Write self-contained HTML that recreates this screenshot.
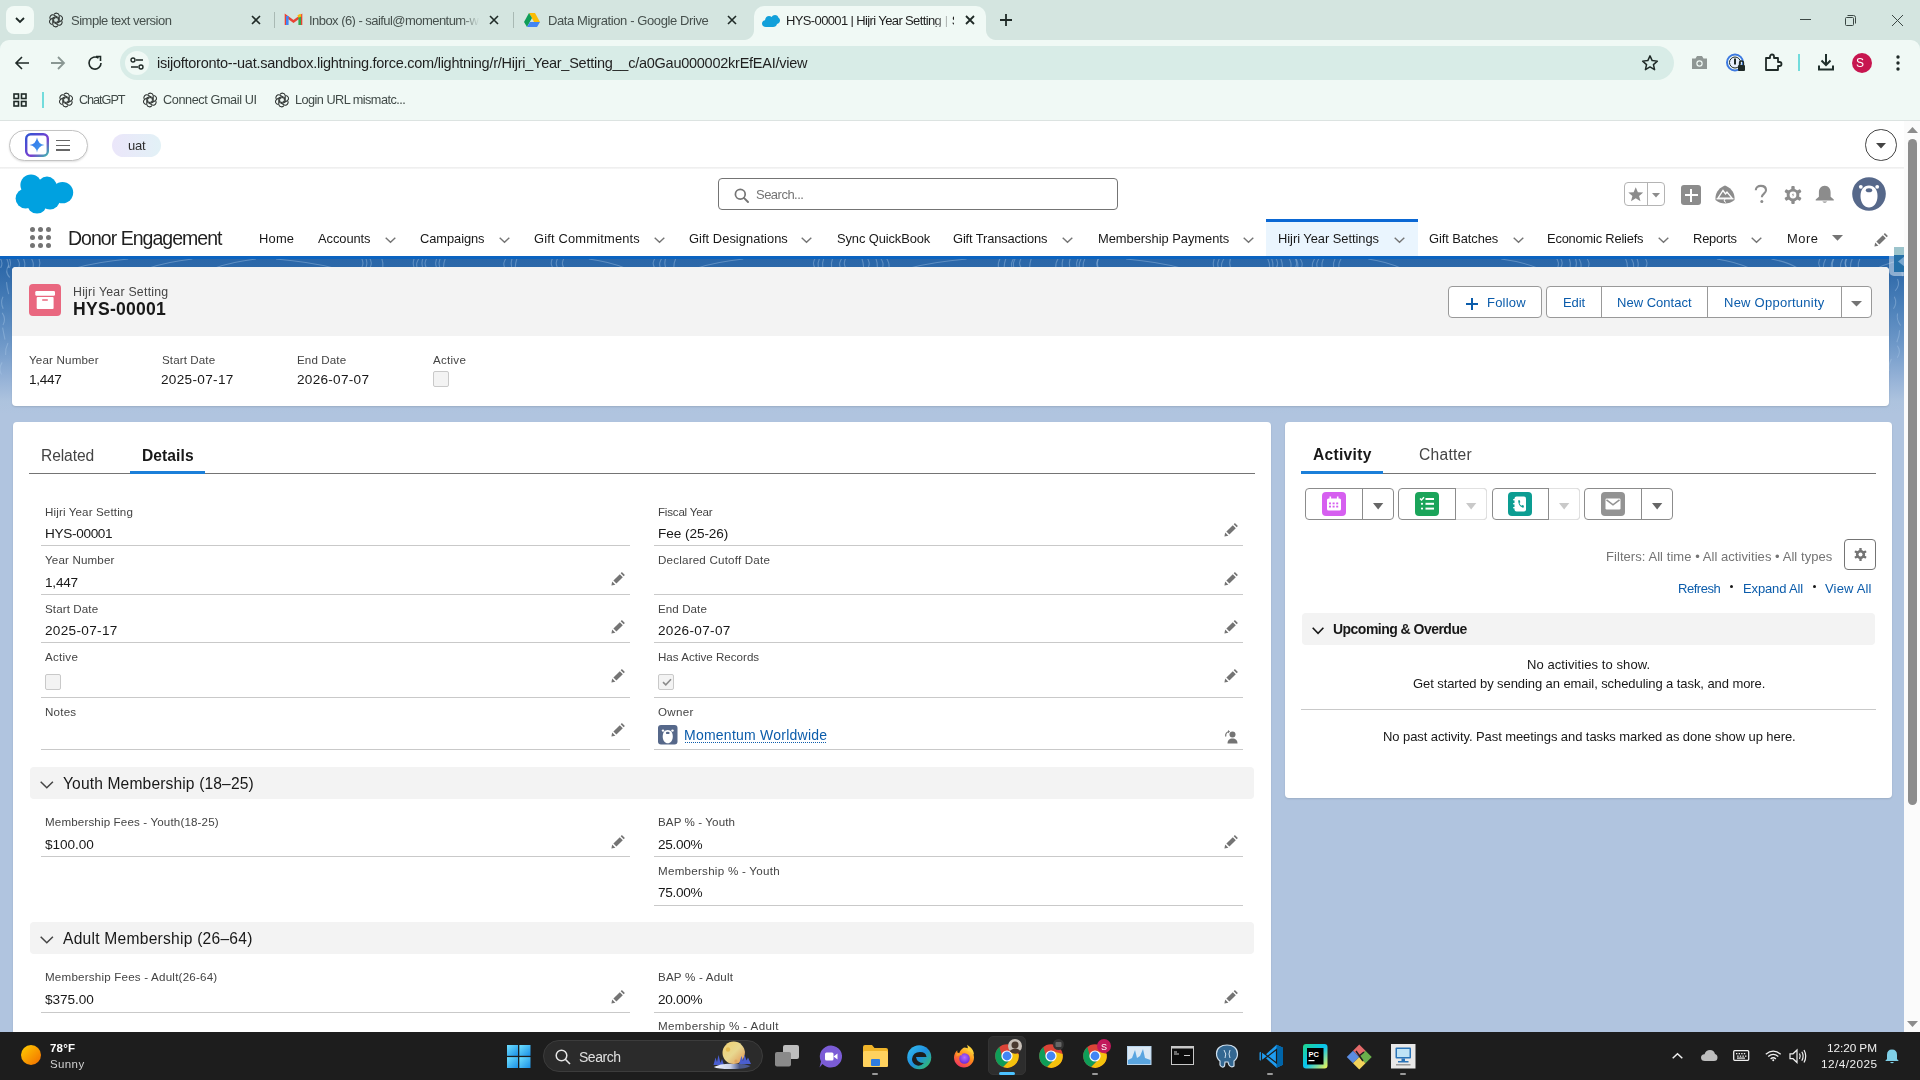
<!DOCTYPE html>
<html><head><meta charset="utf-8">
<style>
*{box-sizing:border-box;margin:0;padding:0}
html,body{width:1920px;height:1080px;overflow:hidden;background:#b0c4df;font-family:"Liberation Sans",sans-serif;}
.a{position:absolute}
.t{position:absolute;white-space:nowrap;line-height:1;font-family:"Liberation Sans",sans-serif;-webkit-font-smoothing:antialiased;will-change:transform}
body{-webkit-font-smoothing:antialiased}
svg{position:absolute;overflow:visible}
/* chrome */
#tabstrip{left:0;top:0;width:1920px;height:60px;background:#d4e5e0}
#toolbar{left:0;top:40px;width:1920px;height:81px;background:#f0f9f5;border-top-left-radius:9px;border-top-right-radius:9px}
#urlbar{left:120px;top:46.2px;width:1554px;height:33.6px;background:#d8ece7;border-radius:17px}
.tabt{font-size:13px;color:#46504d;top:14px}
.ctl{stroke:#1f2a27;stroke-width:1.6;fill:none}
/* salesforce */
#sfwrap{left:0;top:121px;width:1904px;height:911px;background:#b0c4df;overflow:hidden}
.lbl{font-size:12px;color:#444444}
.val{font-size:14px;color:#181818}
.line{position:absolute;height:1px;background:#dddbda}
.pen{position:absolute;width:14px;height:14px}
</style></head>
<body>
<!-- ================= CHROME TAB STRIP ================= -->
<div id="tabstrip" class="a"></div>
<div class="a" style="left:6px;top:6px;width:28px;height:28px;background:#f2faf6;border-radius:8px"></div>
<svg style="left:14px;top:15px" width="12" height="10"><path d="M2 3 L6 7 L10 3" stroke="#1f2a27" stroke-width="1.8" fill="none"></path></svg>

<!-- tab 1 -->
<svg style="left:49px;top:13px" width="14" height="14" viewBox="-12 -12 24 24"><g fill="none" stroke="#2a2f2d" stroke-width="1.8" stroke-linejoin="round"><path d="M-3.5 -9.5 A5 5 0 0 1 5.5 -8 L5.5 1.5 L1 4" transform="rotate(0)"></path><path d="M-3.5 -9.5 A5 5 0 0 1 5.5 -8 L5.5 1.5 L1 4" transform="rotate(60)"></path><path d="M-3.5 -9.5 A5 5 0 0 1 5.5 -8 L5.5 1.5 L1 4" transform="rotate(120)"></path><path d="M-3.5 -9.5 A5 5 0 0 1 5.5 -8 L5.5 1.5 L1 4" transform="rotate(180)"></path><path d="M-3.5 -9.5 A5 5 0 0 1 5.5 -8 L5.5 1.5 L1 4" transform="rotate(240)"></path><path d="M-3.5 -9.5 A5 5 0 0 1 5.5 -8 L5.5 1.5 L1 4" transform="rotate(300)"></path></g></svg>
<div class="t tabt" style="left: 71.22px; letter-spacing: -0.496px; top: 14px;">Simple text version</div>
<svg style="left:252px;top:16px" width="8" height="8"><path d="M0 0L8 8M8 0L0 8" stroke="#1f2a27" stroke-width="1.6"></path></svg>
<div class="a" style="left:274px;top:12px;width:1px;height:16px;background:#a9b9b4"></div>
<!-- tab 2 -->
<svg style="left:286px;top:14px" width="15" height="11" viewBox="0 0 15 11"><path d="M0 11V2L7.5 7.5L15 2V11" fill="none" stroke="#ea4335" stroke-width="2.6"></path><path d="M1.3 11V2" stroke="#4285f4" stroke-width="2.6"></path><path d="M13.7 11V2" stroke="#34a853" stroke-width="2.6"></path><path d="M12 2.5 L15 1" stroke="#fbbc04" stroke-width="2.6"></path></svg>
<div class="t tabt" style="left: 309.22px; width: 172px; overflow: hidden; letter-spacing: -0.548px; top: 14px;">Inbox (6) - saiful@momentum-w</div>
<div class="a" style="left:462px;top:10px;width:22px;height:20px;background:linear-gradient(90deg,rgba(212,229,224,0),#d4e5e0 80%)"></div>
<svg style="left:490px;top:16px" width="8" height="8"><path d="M0 0L8 8M8 0L0 8" stroke="#1f2a27" stroke-width="1.6"></path></svg>
<div class="a" style="left:513px;top:12px;width:1px;height:16px;background:#a9b9b4"></div>
<!-- tab 3 -->
<svg style="left:524px;top:13px" width="16" height="14" viewBox="0 0 16 14"><path d="M5 0h6l5 9H10z" fill="#fbbc04"></path><path d="M5 0L0 9l3 5 5-9z" fill="#0f9d58"></path><path d="M3 14h10l3-5H6z" fill="#4285f4"></path></svg>
<div class="t tabt" style="left: 547.72px; letter-spacing: -0.399px; top: 14px;">Data Migration - Google Drive</div>
<svg style="left:728px;top:16px" width="8" height="8"><path d="M0 0L8 8M8 0L0 8" stroke="#1f2a27" stroke-width="1.6"></path></svg>
<!-- active tab -->
<div class="a" style="left:754px;top:6px;width:232px;height:40px;background:#f0f9f5;border-radius:10px 10px 0 0"></div>
<div class="a" style="left:744px;top:30px;width:10px;height:10px;background:radial-gradient(circle at 0 0,#d4e5e0 9.5px,#f0f9f5 10.5px)"></div>
<div class="a" style="left:986px;top:30px;width:10px;height:10px;background:radial-gradient(circle at 100% 0,#d4e5e0 9.5px,#f0f9f5 10.5px)"></div>
<svg style="left:762px;top:15px" width="18" height="12" viewBox="0 0 18 12"><path d="M4 12C1.5 12 0 10.5 0 8.5 0 6.5 1.5 5.3 3 5.2 3.3 2.6 5 1 7 1c1 0 2 .4 2.6 1C10.3 .8 11.5 0 13 0c1.8 0 3.2 1.2 3.5 2.8 1 .5 1.5 1.6 1.5 2.8 0 1.8-1.3 3.3-3 3.4C14.6 10.8 13 12 11 12z" fill="#12a0da"></path></svg>
<div class="t tabt" style="left: 785.72px; color: rgb(31, 31, 31); width: 168px; overflow: hidden;"><span class="t" style="position: static; letter-spacing: -0.625px;">HYS-00001 | Hijri Year Setting</span> | Salesforce</div>
<div class="a" style="left:934px;top:10px;width:18px;height:20px;background:linear-gradient(90deg,rgba(240,249,245,0),#f0f9f5)"></div>
<svg style="left:966px;top:16px" width="8" height="8"><path d="M0 0L8 8M8 0L0 8" stroke="#1f2a27" stroke-width="1.8"></path></svg>
<svg style="left:1000px;top:14px" width="12" height="12"><path d="M6 0V12M0 6H12" stroke="#1f2a27" stroke-width="1.8"></path></svg>
<!-- window controls -->
<div class="a" style="left:1800px;top:19px;width:11px;height:1px;background:#3b4744"></div>
<svg style="left:1845px;top:15px" width="11" height="11"><rect x="0.5" y="2.5" width="8" height="8" fill="none" stroke="#3b4744" rx="1"></rect><path d="M2.5 0.5h6a2 2 0 0 1 2 2v6" fill="none" stroke="#3b4744"></path></svg>
<svg style="left:1892px;top:15px" width="11" height="11"><path d="M0 0L11 11M11 0L0 11" stroke="#3b4744" stroke-width="1"></path></svg>

<!-- ================= TOOLBAR ================= -->
<div id="toolbar" class="a"></div>
<div id="urlbar" class="a"></div>
<!-- back / fwd / reload -->
<svg style="left:14px;top:55px" width="16" height="16" viewBox="0 0 16 16"><path d="M15 8H2M8 2L2 8L8 14" class="ctl" stroke-width="1.8"></path></svg>
<svg style="left:50px;top:55px" width="16" height="16" viewBox="0 0 16 16"><path d="M1 8H14M8 2L14 8L8 14" fill="none" stroke="#8a9793" stroke-width="1.8"></path></svg>
<svg style="left:87px;top:55px" width="16" height="16" viewBox="0 0 16 16"><path d="M14 8A6 6 0 1 1 11.5 3.2" class="ctl" stroke-width="1.8"></path><path d="M9 1.5H13.5V6" class="ctl" stroke-width="1.8"></path></svg>
<!-- site info -->
<div class="a" style="left:125px;top:51px;width:24px;height:24px;border-radius:12px;background:#f0f9f5"></div>
<svg style="left:130px;top:57px" width="14" height="13" viewBox="0 0 14 13"><circle cx="3" cy="3" r="2" fill="none" stroke="#1f2a27" stroke-width="1.4"></circle><path d="M6 3H13M1 10H8" stroke="#1f2a27" stroke-width="1.6"></path><circle cx="11" cy="10" r="2" fill="none" stroke="#1f2a27" stroke-width="1.4"></circle></svg>
<div class="t" style="left: 156.83px; font-size: 14.5px; color: rgb(31, 31, 31); letter-spacing: -0.253px; top: 55.7px;">isijoftoronto--uat.sandbox.lightning.force.com/lightning/r/Hijri_Year_Setting__c/a0Gau000002krEfEAI/view</div>
<!-- star -->
<svg style="left:1641px;top:54px" width="18" height="18" viewBox="0 0 24 24"><path d="M12 2.5l2.9 6.3 6.9.7-5.2 4.6 1.5 6.8L12 17.3l-6.1 3.6 1.5-6.8L2.2 9.5l6.9-.7z" fill="none" stroke="#1f2a27" stroke-width="2" stroke-linejoin="round"></path></svg>
<!-- camera -->
<svg style="left:1691px;top:55px" width="17" height="15" viewBox="0 0 17 15"><path d="M1 3.5h3.5l1.5-2.5h5l1.5 2.5H16V14H1z" fill="#8f9794"></path><circle cx="8.5" cy="8.5" r="3.2" fill="#f0f9f5"></circle><circle cx="8.5" cy="8.5" r="2" fill="#8f9794"></circle></svg>
<!-- 1password -->
<svg style="left:1726px;top:53px" width="20" height="20" viewBox="0 0 20 20"><circle cx="9" cy="9.5" r="8" fill="none" stroke="#3d7ae0" stroke-width="2"></circle><circle cx="9" cy="9.5" r="5.5" fill="#e8f0fb" stroke="#1f2a27" stroke-width="1"></circle><rect x="8" y="5.5" width="2" height="6" fill="#1f2a27"></rect><rect x="12" y="12" width="7" height="6" fill="#1f2a27" rx="1"></rect><path d="M13.5 12v-2a2 2 0 0 1 4 0v2" fill="none" stroke="#1f2a27" stroke-width="1.3"></path></svg>
<!-- extension -->
<svg style="left:1764px;top:53px" width="19" height="19" viewBox="0 0 19 19"><path d="M2 5h4V3.5a2 2 0 0 1 4 0V5h4v4h1.5a2 2 0 0 1 0 4H14v4H2z" fill="none" stroke="#1f2a27" stroke-width="1.8" stroke-linejoin="round"></path></svg>
<div class="a" style="left:1798px;top:54px;width:2px;height:17px;background:#72dcdc"></div>
<!-- download -->
<svg style="left:1817px;top:53px" width="18" height="18" viewBox="0 0 18 18"><path d="M9 1V12M4.5 7.5L9 12L13.5 7.5M2 12.5V16.5H16V12.5" fill="none" stroke="#1f2f2b" stroke-width="2"></path></svg>
<div class="a" style="left:1852px;top:53px;width:20px;height:20px;border-radius:10px;background:#c7164f"></div>
<div class="t" style="left: 1856.28px; top: 57px; font-size: 12px; color: rgb(255, 255, 255);">S</div>
<svg style="left:1896px;top:55px" width="4" height="16"><circle cx="2" cy="2" r="1.7" fill="#1f2a27"></circle><circle cx="2" cy="8" r="1.7" fill="#1f2a27"></circle><circle cx="2" cy="14" r="1.7" fill="#1f2a27"></circle></svg>

<!-- bookmarks -->
<svg style="left:13px;top:93px" width="14" height="14" viewBox="0 0 14 14"><g fill="none" stroke="#1f2a27" stroke-width="1.6"><rect x="1" y="1" width="4.5" height="4.5"></rect><rect x="8.5" y="1" width="4.5" height="4.5"></rect><rect x="1" y="8.5" width="4.5" height="4.5"></rect><rect x="8.5" y="8.5" width="4.5" height="4.5"></rect></g></svg>
<div class="a" style="left:42px;top:92px;width:2px;height:16px;background:#72dcdc"></div>
<svg style="left:59px;top:93px" width="14" height="14" viewBox="-12 -12 24 24"><g fill="none" stroke="#2a2f2d" stroke-width="1.8" stroke-linejoin="round"><path d="M-3.5 -9.5 A5 5 0 0 1 5.5 -8 L5.5 1.5 L1 4" transform="rotate(0)"></path><path d="M-3.5 -9.5 A5 5 0 0 1 5.5 -8 L5.5 1.5 L1 4" transform="rotate(60)"></path><path d="M-3.5 -9.5 A5 5 0 0 1 5.5 -8 L5.5 1.5 L1 4" transform="rotate(120)"></path><path d="M-3.5 -9.5 A5 5 0 0 1 5.5 -8 L5.5 1.5 L1 4" transform="rotate(180)"></path><path d="M-3.5 -9.5 A5 5 0 0 1 5.5 -8 L5.5 1.5 L1 4" transform="rotate(240)"></path><path d="M-3.5 -9.5 A5 5 0 0 1 5.5 -8 L5.5 1.5 L1 4" transform="rotate(300)"></path></g></svg>
<div class="t" style="left: 79.44px; font-size: 12.7px; color: rgb(64, 74, 71); letter-spacing: -1.053px; top: 94px;">ChatGPT</div>
<svg style="left:143px;top:93px" width="14" height="14" viewBox="-12 -12 24 24"><g fill="none" stroke="#2a2f2d" stroke-width="1.8" stroke-linejoin="round"><path d="M-3.5 -9.5 A5 5 0 0 1 5.5 -8 L5.5 1.5 L1 4" transform="rotate(0)"></path><path d="M-3.5 -9.5 A5 5 0 0 1 5.5 -8 L5.5 1.5 L1 4" transform="rotate(60)"></path><path d="M-3.5 -9.5 A5 5 0 0 1 5.5 -8 L5.5 1.5 L1 4" transform="rotate(120)"></path><path d="M-3.5 -9.5 A5 5 0 0 1 5.5 -8 L5.5 1.5 L1 4" transform="rotate(180)"></path><path d="M-3.5 -9.5 A5 5 0 0 1 5.5 -8 L5.5 1.5 L1 4" transform="rotate(240)"></path><path d="M-3.5 -9.5 A5 5 0 0 1 5.5 -8 L5.5 1.5 L1 4" transform="rotate(300)"></path></g></svg>
<div class="t" style="left: 163.24px; font-size: 12.7px; color: rgb(64, 74, 71); letter-spacing: -0.41px; top: 94px;">Connect Gmail UI</div>
<svg style="left:275px;top:93px" width="14" height="14" viewBox="-12 -12 24 24"><g fill="none" stroke="#2a2f2d" stroke-width="1.8" stroke-linejoin="round"><path d="M-3.5 -9.5 A5 5 0 0 1 5.5 -8 L5.5 1.5 L1 4" transform="rotate(0)"></path><path d="M-3.5 -9.5 A5 5 0 0 1 5.5 -8 L5.5 1.5 L1 4" transform="rotate(60)"></path><path d="M-3.5 -9.5 A5 5 0 0 1 5.5 -8 L5.5 1.5 L1 4" transform="rotate(120)"></path><path d="M-3.5 -9.5 A5 5 0 0 1 5.5 -8 L5.5 1.5 L1 4" transform="rotate(180)"></path><path d="M-3.5 -9.5 A5 5 0 0 1 5.5 -8 L5.5 1.5 L1 4" transform="rotate(240)"></path><path d="M-3.5 -9.5 A5 5 0 0 1 5.5 -8 L5.5 1.5 L1 4" transform="rotate(300)"></path></g></svg>
<div class="t" style="left: 294.74px; font-size: 12.7px; color: rgb(64, 74, 71); letter-spacing: -0.529px; top: 94px;">Login URL mismatc...</div>
<div class="a" style="left:0;top:120px;width:1920px;height:1px;background:#dce3e1"></div>

<div class="a" style="left:0px;top:121px;width:1904px;height:911px;background:#b0c4df"></div>
<div class="a" style="left:0px;top:121px;width:1904px;height:46px;background:#fff"></div>
<div class="a" style="left:0px;top:167px;width:1904px;height:2px;background:linear-gradient(#ececec,#f7f7f7)"></div>
<div class="a" style="left:0px;top:169px;width:1904px;height:87px;background:#fff"></div>
<div class="a" style="left:8.5px;top:129.5px;width:79px;height:31px;border:1px solid #c3c3c3;border-radius:16px;background:#fff;box-shadow:0 1px 2px rgba(0,0,0,0.12)"></div>
<svg style="left:25px;top:133px;" width="24" height="24"><defs><linearGradient id="ag" x1="0" y1="0" x2="1" y2="1"><stop offset="0" stop-color="#2f55d4"></stop><stop offset="0.6" stop-color="#7a3fd0"></stop><stop offset="1" stop-color="#3fb6b0"></stop></linearGradient><linearGradient id="as" x1="0" y1="0" x2="1" y2="1"><stop offset="0" stop-color="#2a6ee8"></stop><stop offset="1" stop-color="#4aa0f0"></stop></linearGradient></defs><rect x="1.2" y="1.2" width="21.6" height="21.6" rx="4.5" fill="#fff" stroke="url(#ag)" stroke-width="2.4"></rect><path d="M12 4.5 Q13 11 19.5 12 Q13 13 12 19.5 Q11 13 4.5 12 Q11 11 12 4.5Z" fill="url(#as)"></path></svg>
<div class="a" style="left:56.2px;top:139.6px;width:13.8px;height:1.4px;background:#666"></div>
<div class="a" style="left:56.2px;top:144.5px;width:13.8px;height:1.4px;background:#666"></div>
<div class="a" style="left:56.2px;top:149.4px;width:13.8px;height:1.4px;background:#666"></div>
<div class="a" style="left:112px;top:134px;width:49px;height:23px;border-radius:12px;background:linear-gradient(90deg,#ebe6fa,#e2f1f6)"></div>
<div class="t" style="left: 127.97px; font-size: 13px; color: rgb(46, 46, 46); letter-spacing: -0.239px; top: 138.75px;">uat</div>
<div class="a" style="left:1865px;top:129px;width:31.5px;height:31.5px;border:1px solid #444;border-radius:50%"></div>
<svg style="left:1875.8px;top:142.5px;" width="10" height="5.5"><path d="M0 0 L10 0 L5.0 5.5Z" fill="#444"></path></svg>
<svg style="left:14px;top:172px;" width="61" height="44"><g fill="#00a1e0"><circle cx="17" cy="13" r="10.6"></circle><circle cx="33" cy="14.2" r="9.6"></circle><circle cx="48.5" cy="20.6" r="10.7"></circle><circle cx="11.6" cy="26.5" r="10"></circle><circle cx="23" cy="31.6" r="10"></circle><circle cx="36" cy="27.5" r="10"></circle><rect x="14" y="15" width="34" height="13"></rect></g></svg>
<div class="a" style="left:718px;top:178px;width:400px;height:32px;border:1px solid #747474;border-radius:4px;background:#fff"></div>
<svg style="left:734px;top:188px;" width="16" height="16"><circle cx="6.3" cy="6.3" r="4.9" fill="none" stroke="#747474" stroke-width="1.7"></circle><path d="M9.9 9.9 L14 14" stroke="#747474" stroke-width="1.9" stroke-linecap="round"></path></svg>
<div class="t" style="left: 755.92px; font-size: 13px; color: rgb(116, 116, 116); letter-spacing: -0.516px; top: 188.3px;">Search...</div>
<div class="a" style="left:1624px;top:182px;width:41px;height:24px;border:1px solid #b4b4b4;border-radius:4px"></div>
<div class="a" style="left:1647px;top:182px;width:1px;height:24px;background:#b4b4b4"></div>
<svg style="left:1628px;top:187.2px;" width="15.5" height="15"><path d="M7.75 0.3 L9.9 5.2 L15.2 5.5 L11.1 8.9 L12.5 14.2 L7.75 11.3 L3 14.2 L4.4 8.9 L0.3 5.5 L5.6 5.2Z" fill="#8c8c8c"></path></svg>
<svg style="left:1651.5px;top:193px;" width="8" height="4.5"><path d="M0 0 L8 0 L4.0 4.5Z" fill="#8c8c8c"></path></svg>
<div class="a" style="left:1681px;top:185px;width:20px;height:20px;background:#8c8c8c;border-radius:3px"></div>
<div class="a" style="left:1684.5px;top:193.9px;width:13px;height:2.4px;background:#fff"></div>
<div class="a" style="left:1689.8px;top:188.6px;width:2.4px;height:13px;background:#fff"></div>
<svg style="left:1715px;top:185px;" width="20" height="19"><path d="M10 0.5 C14.5 2 19 6.5 19.5 12 L19.5 15 C17 17.5 13 18.5 10 18.5 C7 18.5 3 17.5 0.5 15 L0.5 12 C1 6.5 5.5 2 10 0.5Z" fill="#8c8c8c"></path><path d="M3 13.2 L8 5.5 L10.5 9 L12 7 L17 13.2Z" fill="none" stroke="#fff" stroke-width="1.3"></path><path d="M1.5 13.8 L18.5 13.8" stroke="#fff" stroke-width="1.2"></path><path d="M10 14 L9 16 L11 17.5" stroke="#fff" stroke-width="1" fill="none"></path></svg>
<svg style="left:1754px;top:185px;" width="14" height="19"><path d="M1.8 5.2 C1.8 2.5 4 0.9 6.8 0.9 C9.8 0.9 12 2.6 12 5.3 C12 8.5 7.8 8.8 7.8 12.3" fill="none" stroke="#8c8c8c" stroke-width="2.1"></path><circle cx="7.8" cy="16.6" r="1.5" fill="#8c8c8c"></circle></svg>
<svg style="left:1784px;top:186px;" width="18" height="18"><g fill="#8c8c8c"><circle cx="9" cy="9" r="6.3"></circle><rect x="7.3" y="0" width="3.4" height="18" rx="1"></rect><rect x="7.3" y="0" width="3.4" height="18" rx="1" transform="rotate(60 9 9)"></rect><rect x="7.3" y="0" width="3.4" height="18" rx="1" transform="rotate(120 9 9)"></rect></g><circle cx="9" cy="9" r="3.4" fill="#fff"></circle><path d="M9.6 6.6 L7.8 9.3 L9.3 9.3 L8.4 11.5 L10.3 8.6 L8.9 8.6Z" fill="#8c8c8c"></path></svg>
<svg style="left:1815px;top:184.5px;" width="19.5" height="19"><path d="M9.75 0.8 C13.6 0.8 15.6 3.8 15.6 7.5 L15.6 11.8 L18.8 14.6 L18.8 15.6 L0.7 15.6 L0.7 14.6 L3.9 11.8 L3.9 7.5 C3.9 3.8 5.9 0.8 9.75 0.8Z" fill="#8c8c8c"></path><path d="M7.3 16.6 Q9.75 19 12.2 16.6Z" fill="#8c8c8c"></path></svg>
<svg style="left:1852px;top:177px;" width="34" height="34"><circle cx="17" cy="17" r="16.8" fill="#56688a"></circle><circle cx="8.8" cy="9.8" r="1.9" fill="#fff"></circle><circle cx="25.2" cy="9.8" r="1.9" fill="#fff"></circle><path d="M17 8.5 C22.5 8.5 25.5 13 25.5 19 C25.5 26 21.5 30.5 17 30.5 C12.5 30.5 8.5 26 8.5 19 C8.5 13 11.5 8.5 17 8.5Z" fill="#fff"></path><ellipse cx="17" cy="13.2" rx="3.2" ry="2" fill="#56688a"></ellipse></svg>
<div class="a" style="left:30.0px;top:227.0px;width:5.2px;height:5.2px;border-radius:50%;background:#747474"></div>
<div class="a" style="left:30.0px;top:235.0px;width:5.2px;height:5.2px;border-radius:50%;background:#747474"></div>
<div class="a" style="left:30.0px;top:243.0px;width:5.2px;height:5.2px;border-radius:50%;background:#747474"></div>
<div class="a" style="left:38.1px;top:227.0px;width:5.2px;height:5.2px;border-radius:50%;background:#747474"></div>
<div class="a" style="left:38.1px;top:235.0px;width:5.2px;height:5.2px;border-radius:50%;background:#747474"></div>
<div class="a" style="left:38.1px;top:243.0px;width:5.2px;height:5.2px;border-radius:50%;background:#747474"></div>
<div class="a" style="left:46.199999999999996px;top:227.0px;width:5.2px;height:5.2px;border-radius:50%;background:#747474"></div>
<div class="a" style="left:46.199999999999996px;top:235.0px;width:5.2px;height:5.2px;border-radius:50%;background:#747474"></div>
<div class="a" style="left:46.199999999999996px;top:243.0px;width:5.2px;height:5.2px;border-radius:50%;background:#747474"></div>
<div class="t" style="left: 67.58px; font-size: 19.5px; color: rgb(31, 31, 31); letter-spacing: -0.978px; top: 228.5px;">Donor Engagement</div>
<div class="a" style="left:1266.25px;top:219px;width:152px;height:37px;background:#eaf5fe"></div>
<div class="a" style="left:1266.25px;top:219px;width:152px;height:3px;background:#0b68d4"></div>
<div class="t" style="left: 259.23px; font-size: 12.9px; color: rgb(24, 24, 24); letter-spacing: 0.216px; top: 233px;">Home</div>
<div class="t" style="left: 317.98px; font-size: 12.9px; color: rgb(24, 24, 24); letter-spacing: -0.07px; top: 233px;">Accounts</div>
<svg style="left:385px;top:236.8px;" width="11" height="6"><path d="M0.7 0.7 L5.5 5.3 L10.3 0.7" fill="none" stroke="#747474" stroke-width="1.4"></path></svg>
<div class="t" style="left: 420.48px; font-size: 12.9px; color: rgb(24, 24, 24); letter-spacing: -0.083px; top: 233px;">Campaigns</div>
<svg style="left:498.75px;top:236.8px;" width="11" height="6"><path d="M0.7 0.7 L5.5 5.3 L10.3 0.7" fill="none" stroke="#747474" stroke-width="1.4"></path></svg>
<div class="t" style="left: 534.23px; font-size: 12.9px; color: rgb(24, 24, 24); letter-spacing: 0.177px; top: 233px;">Gift Commitments</div>
<svg style="left:653.75px;top:236.8px;" width="11" height="6"><path d="M0.7 0.7 L5.5 5.3 L10.3 0.7" fill="none" stroke="#747474" stroke-width="1.4"></path></svg>
<div class="t" style="left: 689.23px; font-size: 12.9px; color: rgb(24, 24, 24); letter-spacing: 0.039px; top: 233px;">Gift Designations</div>
<svg style="left:801.25px;top:236.8px;" width="11" height="6"><path d="M0.7 0.7 L5.5 5.3 L10.3 0.7" fill="none" stroke="#747474" stroke-width="1.4"></path></svg>
<div class="t" style="left: 837.23px; font-size: 12.9px; color: rgb(24, 24, 24); letter-spacing: -0.099px; top: 233px;">Sync QuickBook</div>
<div class="t" style="left: 953.48px; font-size: 12.9px; color: rgb(24, 24, 24); letter-spacing: -0.136px; top: 233px;">Gift Transactions</div>
<svg style="left:1062px;top:236.8px;" width="11" height="6"><path d="M0.7 0.7 L5.5 5.3 L10.3 0.7" fill="none" stroke="#747474" stroke-width="1.4"></path></svg>
<div class="t" style="left: 1097.98px; font-size: 12.9px; color: rgb(24, 24, 24); letter-spacing: -0.03px; top: 233px;">Membership Payments</div>
<svg style="left:1242.5px;top:236.8px;" width="11" height="6"><path d="M0.7 0.7 L5.5 5.3 L10.3 0.7" fill="none" stroke="#747474" stroke-width="1.4"></path></svg>
<div class="t" style="left: 1278.48px; font-size: 12.9px; color: rgb(24, 24, 24); letter-spacing: -0.039px; top: 233px;">Hijri Year Settings</div>
<svg style="left:1393.75px;top:236.8px;" width="11" height="6"><path d="M0.7 0.7 L5.5 5.3 L10.3 0.7" fill="none" stroke="#747474" stroke-width="1.4"></path></svg>
<div class="t" style="left: 1428.73px; font-size: 12.9px; color: rgb(24, 24, 24); letter-spacing: -0.084px; top: 233px;">Gift Batches</div>
<svg style="left:1512.5px;top:236.8px;" width="11" height="6"><path d="M0.7 0.7 L5.5 5.3 L10.3 0.7" fill="none" stroke="#747474" stroke-width="1.4"></path></svg>
<div class="t" style="left: 1547.23px; font-size: 12.9px; color: rgb(24, 24, 24); letter-spacing: -0.204px; top: 233px;">Economic Reliefs</div>
<svg style="left:1657.5px;top:236.8px;" width="11" height="6"><path d="M0.7 0.7 L5.5 5.3 L10.3 0.7" fill="none" stroke="#747474" stroke-width="1.4"></path></svg>
<div class="t" style="left: 1693.48px; font-size: 12.9px; color: rgb(24, 24, 24); letter-spacing: -0.183px; top: 233px;">Reports</div>
<svg style="left:1751.25px;top:236.8px;" width="11" height="6"><path d="M0.7 0.7 L5.5 5.3 L10.3 0.7" fill="none" stroke="#747474" stroke-width="1.4"></path></svg>
<div class="t" style="left: 1787.48px; font-size: 12.9px; color: rgb(24, 24, 24); letter-spacing: 0.555px; top: 233px;">More</div>
<svg style="left:1831.7px;top:235px;" width="11" height="5.8"><path d="M0 0 L11 0 L5.5 5.8Z" fill="#747474"></path></svg>
<svg style="left:1873.5px;top:232.5px;" width="14" height="14"><g fill="#747474"><path d="M0.4 13.6 L1.2 9.6 L4.4 12.8Z"></path><path d="M2.4 8.6 L8.8 2.2 L11.8 5.2 L5.4 11.6Z"></path><path d="M9.7 1.3 L10.9 0.1 L13.9 3.1 L12.7 4.3Z"></path></g></svg>
<div class="a" style="left:0px;top:256px;width:1904px;height:200px;background:linear-gradient(180deg,#2a66a8 0px,#2c68a9 10px,#3770ae 25px,#4b80b9 50px,#6e98c8 88px,#98b4d8 125px,#adc3de 145px,#b0c4df 158px)"></div>
<svg style="left:0;top:0" width="1904" height="1080"><g fill="none" stroke="rgba(175,205,235,0.38)" stroke-width="1.1"><path d="M0.0 258 Q3.6 262.5 0.6 268"></path><path d="M6.4 258 Q9.1 262.5 8.3 268"></path><path d="M9.1 258 Q11.7 262.5 9.5 268"></path><path d="M16.8 258 Q20.6 262.5 18.8 268"></path><path d="M23.1 258 Q25.6 262.5 24.5 268"></path><path d="M31.1 258 Q34.2 262.5 33.0 268"></path><path d="M39.0 258 Q40.6 262.5 39.1 268"></path><path d="M76.0 268 Q96.9 262 128.2 259"></path><path d="M149.2 268 Q166.5 262 192.4 259"></path><path d="M214.9 268 Q231.3 262 255.9 259"></path><path d="M276.0 259 Q310.6 262 333.7 268"></path><path d="M361.4 258 Q364.3 262.5 361.7 268"></path><path d="M365.7 258 Q367.9 262.5 365.9 268"></path><path d="M369.5 258 Q372.7 262.5 370.1 268"></path><path d="M381.7 258 Q383.3 262.5 382.8 268"></path><path d="M414.4 258 Q412.2 262.5 414.2 268"></path><path d="M419.4 258 Q415.5 262.5 417.1 268"></path><path d="M423.1 258 Q421.0 262.5 422.8 268"></path><path d="M427.0 258 Q423.5 262.5 426.4 268"></path><path d="M437.1 258 Q434.5 262.5 436.6 268"></path><path d="M445.4 258 Q443.6 262.5 443.5 268"></path><path d="M440.5 258 Q438.0 262.5 439.9 268"></path><path d="M506.4 258 Q502.4 262.5 504.6 268"></path><path d="M512.1 258 Q510.5 262.5 511.7 268"></path><path d="M517.0 258 Q515.5 262.5 515.2 268"></path><path d="M552.8 258 Q549.7 262.5 552.7 268"></path><path d="M557.9 258 Q554.8 262.5 557.5 268"></path><path d="M564.3 258 Q560.7 262.5 563.9 268"></path><path d="M588.9 259 Q610.5 262 624.8 268"></path><path d="M655.3 258 Q651.4 262.5 654.7 268"></path><path d="M662.1 258 Q658.4 262.5 660.3 268"></path><path d="M665.8 258 Q664.0 262.5 665.7 268"></path><path d="M675.9 258 Q673.8 262.5 673.8 268"></path><path d="M697.4 268 Q715.7 262 743.2 259"></path><path d="M815.5 258 Q811.8 262.5 814.9 268"></path><path d="M819.6 258 Q817.4 262.5 818.3 268"></path><path d="M823.9 258 Q822.0 262.5 822.8 268"></path><path d="M832.7 258 Q830.9 262.5 831.6 268"></path><path d="M842.2 258 Q838.3 262.5 840.3 268"></path><path d="M845.9 258 Q843.0 262.5 845.5 268"></path><path d="M861.8 258 Q863.3 262.5 863.7 268"></path><path d="M867.2 258 Q870.6 262.5 868.2 268"></path><path d="M875.8 258 Q877.5 262.5 877.4 268"></path><path d="M880.4 258 Q884.2 262.5 882.6 268"></path><path d="M886.2 258 Q889.7 262.5 889.0 268"></path><path d="M910.0 268 Q932.6 262 966.6 259"></path><path d="M1000.2 258 Q997.7 262.5 998.4 268"></path><path d="M1006.0 258 Q1004.3 262.5 1004.1 268"></path><path d="M1014.1 258 Q1010.4 262.5 1011.9 268"></path><path d="M1015.7 258 Q1012.3 262.5 1013.9 268"></path><path d="M1021.5 258 Q1017.9 262.5 1021.2 268"></path><path d="M1031.4 258 Q1029.8 262.5 1029.6 268"></path><path d="M1058.4 258 Q1055.4 262.5 1055.7 268"></path><path d="M1063.2 258 Q1061.7 262.5 1062.3 268"></path><path d="M1070.5 258 Q1068.5 262.5 1070.0 268"></path><path d="M1078.6 258 Q1075.4 262.5 1077.3 268"></path><path d="M1085.1 258 Q1082.8 262.5 1083.1 268"></path><path d="M1081.4 258 Q1078.8 262.5 1079.0 268"></path><path d="M1098.9 258 Q1095.2 262.5 1097.7 268"></path><path d="M1098.7 258 Q1096.4 262.5 1098.3 268"></path><path d="M1126.1 259 Q1158.9 262 1180.8 268"></path><path d="M1214.6 258 Q1212.4 262.5 1213.9 268"></path><path d="M1219.8 258 Q1216.7 262.5 1218.3 268"></path><path d="M1224.5 258 Q1220.9 262.5 1221.5 268"></path><path d="M1230.6 258 Q1228.9 262.5 1230.5 268"></path><path d="M1267.5 258 Q1269.7 262.5 1269.8 268"></path><path d="M1271.5 258 Q1273.3 262.5 1272.9 268"></path><path d="M1275.6 258 Q1279.2 262.5 1276.3 268"></path><path d="M1280.7 258 Q1282.3 262.5 1282.6 268"></path><path d="M1288.8 258 Q1291.9 262.5 1290.8 268"></path><path d="M1299.6 258 Q1303.5 262.5 1301.6 268"></path><path d="M1295.0 258 Q1297.7 262.5 1295.6 268"></path><path d="M1295.7 258 Q1298.4 262.5 1297.8 268"></path><path d="M1315.2 258 Q1311.7 262.5 1312.4 268"></path><path d="M1319.4 258 Q1315.6 262.5 1317.3 268"></path><path d="M1323.9 258 Q1321.3 262.5 1322.1 268"></path><path d="M1335.3 258 Q1332.9 262.5 1333.6 268"></path><path d="M1341.7 258 Q1338.2 262.5 1338.9 268"></path><path d="M1368.3 259 Q1387.6 262 1400.5 268"></path><path d="M1501.3 259 Q1523.1 262 1537.5 268"></path><path d="M1556.3 258 Q1559.7 262.5 1557.7 268"></path><path d="M1560.3 258 Q1563.9 262.5 1560.5 268"></path><path d="M1569.1 258 Q1571.0 262.5 1570.1 268"></path><path d="M1575.3 258 Q1577.2 262.5 1575.8 268"></path><path d="M1578.5 258 Q1581.8 262.5 1581.0 268"></path><path d="M1586.6 258 Q1590.5 262.5 1588.1 268"></path><path d="M1625.3 258 Q1627.5 262.5 1627.5 268"></path><path d="M1631.2 258 Q1634.0 262.5 1633.8 268"></path><path d="M1636.7 258 Q1639.0 262.5 1637.8 268"></path><path d="M1644.9 258 Q1648.7 262.5 1645.6 268"></path><path d="M1716.9 259 Q1736.1 262 1749.0 268"></path><path d="M1771.5 259 Q1787.1 262 1797.5 268"></path><path d="M1820.4 258 Q1817.2 262.5 1820.2 268"></path><path d="M1826.0 258 Q1823.5 262.5 1823.2 268"></path><path d="M1834.0 258 Q1831.8 262.5 1832.5 268"></path><path d="M1833.6 258 Q1831.0 262.5 1831.1 268"></path><path d="M1847.2 258 Q1844.5 262.5 1846.3 268"></path><path d="M1843.3 258 Q1840.2 262.5 1840.5 268"></path><path d="M1846.7 258 Q1843.3 262.5 1846.7 268"></path><path d="M1852.5 258 Q1850.4 262.5 1850.4 268"></path><path d="M1860.1 258 Q1857.8 262.5 1858.3 268"></path><path d="M1877.8 268 Q1889.5 262 1907.1 259"></path><path d="M8.9 265.5 Q4.1 271.5 9.7 277.5"></path><path d="M6.5 282.1 Q6.9 288.1 8.7 294.1"></path><path d="M3.0 296.7 Q0.1 302.7 3.2 308.7"></path><path d="M2.2 312.9 Q6.4 318.9 3.0 324.9"></path><path d="M2.6 327.7 Q3.7 333.7 5.0 339.7"></path><path d="M8.0 343.0 Q5.0 349.0 5.6 355.0"></path><path d="M2.2 362.4 Q-1.9 368.4 1.5 374.4"></path><path d="M1901.3 264.2 Q1901.7 270.2 1902.5 276.2"></path><path d="M1897.5 279.0 Q1900.5 285.0 1895.1 291.0"></path><path d="M1894.3 296.8 Q1897.5 302.8 1893.5 308.8"></path><path d="M1897.6 313.5 Q1896.1 319.5 1900.6 325.5"></path><path d="M1899.6 330.2 Q1899.5 336.2 1896.8 342.2"></path><path d="M1897.4 345.8 Q1901.4 351.8 1897.2 357.8"></path><path d="M1891.4 358.9 Q1888.1 364.9 1889.3 370.9"></path></g></svg>
<div class="a" style="left:0px;top:256px;width:1904px;height:2.5px;background:#0b63c0"></div>
<div class="a" style="left:1888.5px;top:242.6px;width:16px;height:33px;background:rgba(255,255,255,0.45);border-radius:5px 0 0 5px"></div>
<div class="a" style="left:1894px;top:247px;width:10.7px;height:8px;background:#9cc4cc"></div>
<div class="a" style="left:1894px;top:255px;width:10.7px;height:17px;background:#2570a8"></div>
<svg style="left:1897.5px;top:256px;" width="7" height="11"><path d="M7 0 L0 5.5 L7 11Z" fill="#7aa8cf"></path></svg>
<div class="a" style="left:11.5px;top:266.7px;width:1877.5px;height:139.1px;background:#fff;border-radius:4px;box-shadow:0 1px 2px rgba(0,0,0,0.12);overflow:hidden"></div>
<div class="a" style="left:11.5px;top:266.7px;width:1877.5px;height:69px;background:#f3f3f3;border-radius:4px 4px 0 0"></div>
<svg style="left:29px;top:284px;" width="32" height="32"><rect x="0" y="0" width="32" height="32" rx="4" fill="#e9677f"></rect><rect x="6.3" y="7" width="19.7" height="4.7" rx="1.2" fill="#fff"></rect><rect x="7.7" y="12.9" width="16.9" height="12" rx="1" fill="#fff"></rect><rect x="13" y="15.3" width="6" height="1.5" rx="0.7" fill="#e9677f"></rect></svg>
<div class="t" style="left: 72.86px; font-size: 12.3px; color: rgb(68, 68, 68); letter-spacing: 0.253px; top: 285.9px;">Hijri Year Setting</div>
<div class="t" style="left: 72.84px; font-size: 17.6px; color: rgb(24, 24, 24); font-weight: 700; letter-spacing: 0.236px; top: 300.7px;">HYS-00001</div>
<div class="a" style="left:1448.3px;top:286px;width:93.4px;height:31.7px;border:1px solid #999;border-radius:4px;background:#fff"></div>
<div class="a" style="left:1465.7px;top:303px;width:12.6px;height:1.6px;background:#0b5cab"></div>
<div class="a" style="left:1471.2px;top:297.7px;width:1.6px;height:12.4px;background:#0b5cab"></div>
<div class="t" style="left: 1486.92px; font-size: 13px; color: rgb(11, 92, 171); letter-spacing: 0.204px; top: 296.3px;">Follow</div>
<div class="a" style="left:1546px;top:286px;width:325.7px;height:31.7px;border:1px solid #999;border-radius:4px;background:#fff"></div>
<div class="a" style="left:1600.7px;top:286px;width:1px;height:31.7px;background:#999"></div>
<div class="a" style="left:1707.3px;top:286px;width:1px;height:31.7px;background:#999"></div>
<div class="a" style="left:1840.7px;top:286px;width:1px;height:31.7px;background:#999"></div>
<div class="t" style="left: 1562.52px; font-size: 13px; color: rgb(11, 92, 171); letter-spacing: -0.135px; top: 296.3px;">Edit</div>
<div class="t" style="left: 1616.92px; font-size: 13px; color: rgb(11, 92, 171); letter-spacing: 0.018px; top: 296.3px;">New Contact</div>
<div class="t" style="left: 1724.22px; font-size: 13px; color: rgb(11, 92, 171); letter-spacing: 0.248px; top: 296.3px;">New Opportunity</div>
<svg style="left:1850.7px;top:300.5px;" width="11" height="5.5"><path d="M0 0 L11 0 L5.5 5.5Z" fill="#747474"></path></svg>
<div class="t" style="left: 28.7px; font-size: 11.6px; color: rgb(68, 68, 68); letter-spacing: 0.167px; top: 353.9px;">Year Number</div>
<div class="t" style="left: 161.6px; font-size: 11.6px; color: rgb(68, 68, 68); letter-spacing: 0.106px; top: 353.9px;">Start Date</div>
<div class="t" style="left: 297px; font-size: 11.6px; color: rgb(68, 68, 68); letter-spacing: 0.117px; top: 353.9px;">End Date</div>
<div class="t" style="left: 432.6px; font-size: 11.6px; color: rgb(68, 68, 68); letter-spacing: 0.256px; top: 353.9px;">Active</div>
<div class="t" style="left: 29.38px; font-size: 13.6px; color: rgb(24, 24, 24); letter-spacing: -0.293px; top: 372.9px;">1,447</div>
<div class="t" style="left: 161.48px; font-size: 13.6px; color: rgb(24, 24, 24); letter-spacing: 0.313px; top: 372.9px;">2025-07-17</div>
<div class="t" style="left: 296.88px; font-size: 13.6px; color: rgb(24, 24, 24); letter-spacing: 0.268px; top: 372.9px;">2026-07-07</div>
<div class="a" style="left:433.3px;top:371px;width:16px;height:16px;border:1px solid #c9c9c9;border-radius:2px;background:#f3f3f3"></div>
<div class="a" style="left:12.7px;top:421.6px;width:1258.3px;height:700px;background:#fff;border-radius:4px;box-shadow:0 1px 2px rgba(0,0,0,0.12)"></div>
<div class="t" style="left: 40.76px; font-size: 15.6px; color: rgb(68, 68, 68); letter-spacing: -0.098px; top: 447.7px;">Related</div>
<div class="t" style="left: 141.76px; font-size: 15.6px; color: rgb(24, 24, 24); font-weight: 700; letter-spacing: 0.07px; top: 447.7px;">Details</div>
<div class="a" style="left:29px;top:472.7px;width:1226px;height:1px;background:#747474"></div>
<div class="a" style="left:130px;top:470.7px;width:75px;height:3px;background:#1b7fd9"></div>
<div class="t" style="left: 44.9px; font-size: 11.6px; color: rgb(68, 68, 68); letter-spacing: 0.126px; top: 505.9px;">Hijri Year Setting</div>
<div class="t" style="left: 44.78px; font-size: 13.6px; color: rgb(24, 24, 24); letter-spacing: -0.328px; top: 527px;">HYS-00001</div>
<div class="a" style="left:41px;top:545px;width:589px;height:1px;background:#c9c9c9"></div>
<div class="t" style="left: 657.8px; font-size: 11.6px; color: rgb(68, 68, 68); letter-spacing: -0.216px; top: 505.9px;">Fiscal Year</div>
<div class="t" style="left: 657.68px; font-size: 13.6px; color: rgb(24, 24, 24); letter-spacing: -0.067px; top: 527px;">Fee (25-26)</div>
<div class="a" style="left:654px;top:545px;width:588.7px;height:1px;background:#c9c9c9"></div>
<svg style="left:1224px;top:522.5px;" width="14" height="14"><g fill="#747474"><path d="M0.4 13.6 L1.2 9.6 L4.4 12.8Z"></path><path d="M2.4 8.6 L8.8 2.2 L11.8 5.2 L5.4 11.6Z"></path><path d="M9.7 1.3 L10.9 0.1 L13.9 3.1 L12.7 4.3Z"></path></g></svg>
<div class="t" style="left: 44.9px; font-size: 11.6px; color: rgb(68, 68, 68); letter-spacing: 0.147px; top: 553.9px;">Year Number</div>
<div class="t" style="left: 44.78px; font-size: 13.6px; color: rgb(24, 24, 24); letter-spacing: -0.218px; top: 576px;">1,447</div>
<div class="a" style="left:41px;top:594px;width:589px;height:1px;background:#c9c9c9"></div>
<svg style="left:611.3px;top:572px;" width="14" height="14"><g fill="#747474"><path d="M0.4 13.6 L1.2 9.6 L4.4 12.8Z"></path><path d="M2.4 8.6 L8.8 2.2 L11.8 5.2 L5.4 11.6Z"></path><path d="M9.7 1.3 L10.9 0.1 L13.9 3.1 L12.7 4.3Z"></path></g></svg>
<div class="t" style="left: 657.8px; font-size: 11.6px; color: rgb(68, 68, 68); letter-spacing: 0.2px; top: 553.9px;">Declared Cutoff Date</div>
<div class="a" style="left:654px;top:594px;width:588.7px;height:1px;background:#c9c9c9"></div>
<svg style="left:1224px;top:572px;" width="14" height="14"><g fill="#747474"><path d="M0.4 13.6 L1.2 9.6 L4.4 12.8Z"></path><path d="M2.4 8.6 L8.8 2.2 L11.8 5.2 L5.4 11.6Z"></path><path d="M9.7 1.3 L10.9 0.1 L13.9 3.1 L12.7 4.3Z"></path></g></svg>
<div class="t" style="left: 44.9px; font-size: 11.6px; color: rgb(68, 68, 68); letter-spacing: 0.106px; top: 603px;">Start Date</div>
<div class="t" style="left: 44.78px; font-size: 13.6px; color: rgb(24, 24, 24); letter-spacing: 0.313px; top: 624px;">2025-07-17</div>
<div class="a" style="left:41px;top:642px;width:589px;height:1px;background:#c9c9c9"></div>
<svg style="left:611.3px;top:620px;" width="14" height="14"><g fill="#747474"><path d="M0.4 13.6 L1.2 9.6 L4.4 12.8Z"></path><path d="M2.4 8.6 L8.8 2.2 L11.8 5.2 L5.4 11.6Z"></path><path d="M9.7 1.3 L10.9 0.1 L13.9 3.1 L12.7 4.3Z"></path></g></svg>
<div class="t" style="left: 657.8px; font-size: 11.6px; color: rgb(68, 68, 68); letter-spacing: 0.074px; top: 603px;">End Date</div>
<div class="t" style="left: 657.68px; font-size: 13.6px; color: rgb(24, 24, 24); letter-spacing: 0.313px; top: 624px;">2026-07-07</div>
<div class="a" style="left:654px;top:642px;width:588.7px;height:1px;background:#c9c9c9"></div>
<svg style="left:1224px;top:620px;" width="14" height="14"><g fill="#747474"><path d="M0.4 13.6 L1.2 9.6 L4.4 12.8Z"></path><path d="M2.4 8.6 L8.8 2.2 L11.8 5.2 L5.4 11.6Z"></path><path d="M9.7 1.3 L10.9 0.1 L13.9 3.1 L12.7 4.3Z"></path></g></svg>
<div class="t" style="left: 44.9px; font-size: 11.6px; color: rgb(68, 68, 68); letter-spacing: 0.256px; top: 651px;">Active</div>
<div class="a" style="left:41px;top:697px;width:589px;height:1px;background:#c9c9c9"></div>
<svg style="left:611.3px;top:669.3px;" width="14" height="14"><g fill="#747474"><path d="M0.4 13.6 L1.2 9.6 L4.4 12.8Z"></path><path d="M2.4 8.6 L8.8 2.2 L11.8 5.2 L5.4 11.6Z"></path><path d="M9.7 1.3 L10.9 0.1 L13.9 3.1 L12.7 4.3Z"></path></g></svg>
<div class="a" style="left:45px;top:674px;width:16px;height:16px;border:1px solid #c9c9c9;border-radius:2px;background:#f3f3f3"></div>
<div class="t" style="left: 657.8px; font-size: 11.6px; color: rgb(68, 68, 68); letter-spacing: -0.001px; top: 651px;">Has Active Records</div>
<div class="a" style="left:654px;top:697px;width:588.7px;height:1px;background:#c9c9c9"></div>
<svg style="left:1224px;top:669.3px;" width="14" height="14"><g fill="#747474"><path d="M0.4 13.6 L1.2 9.6 L4.4 12.8Z"></path><path d="M2.4 8.6 L8.8 2.2 L11.8 5.2 L5.4 11.6Z"></path><path d="M9.7 1.3 L10.9 0.1 L13.9 3.1 L12.7 4.3Z"></path></g></svg>
<div class="a" style="left:658.3px;top:674px;width:16px;height:16px;border:1px solid #c9c9c9;border-radius:2px;background:#f3f3f3"></div>
<svg style="left:661.5px;top:678px;" width="10" height="8"><path d="M1 4.2 L3.8 6.8 L9 1.2" fill="none" stroke="#8c8c8c" stroke-width="1.6"></path></svg>
<div class="t" style="left: 44.9px; font-size: 11.6px; color: rgb(68, 68, 68); letter-spacing: 0.216px; top: 706px;">Notes</div>
<div class="a" style="left:41px;top:749px;width:589px;height:1px;background:#c9c9c9"></div>
<svg style="left:611.3px;top:723.3px;" width="14" height="14"><g fill="#747474"><path d="M0.4 13.6 L1.2 9.6 L4.4 12.8Z"></path><path d="M2.4 8.6 L8.8 2.2 L11.8 5.2 L5.4 11.6Z"></path><path d="M9.7 1.3 L10.9 0.1 L13.9 3.1 L12.7 4.3Z"></path></g></svg>
<div class="t" style="left: 657.8px; font-size: 11.6px; color: rgb(68, 68, 68); letter-spacing: 0.326px; top: 706px;">Owner</div>
<div class="a" style="left:654px;top:749px;width:588.7px;height:1px;background:#c9c9c9"></div>
<svg style="left:658.3px;top:725px;" width="19.5" height="19.5"><rect width="19.5" height="19.5" rx="3" fill="#56688a"></rect><circle cx="5" cy="5.6" r="1.2" fill="#fff"></circle><circle cx="14.5" cy="5.6" r="1.2" fill="#fff"></circle><path d="M9.75 5 C13 5 14.8 7.8 14.8 11.4 C14.8 15.6 12.4 18.2 9.75 18.2 C7.1 18.2 4.7 15.6 4.7 11.4 C4.7 7.8 6.5 5 9.75 5Z" fill="#fff"></path><ellipse cx="9.75" cy="7.9" rx="1.9" ry="1.2" fill="#56688a"></ellipse></svg>
<div class="t" style="left: 684.16px; font-size: 14px; color: rgb(11, 92, 171); letter-spacing: 0.24px; top: 728px;">Momentum Worldwide</div>
<div class="a" style="left:685px;top:741.8px;width:141.7px;height:1px;background:repeating-linear-gradient(90deg,#0b5cab 0 1px,transparent 1px 2px)"></div>
<svg style="left:1224.5px;top:729.5px;" width="13" height="14"><circle cx="7.5" cy="4.6" r="3" fill="#747474"></circle><path d="M2.5 13.5 C2.5 10 4.5 8.4 7.5 8.4 C10.5 8.4 12.5 10 12.5 13.5Z" fill="#747474"></path><path d="M0.8 6.5 A4 4 0 0 1 4 1.5" fill="none" stroke="#747474" stroke-width="1.2"></path><path d="M3 0 L5 1.6 L3 3.2Z" fill="#747474"></path></svg>
<div class="a" style="left:30.3px;top:767.2px;width:1223.7px;height:31.4px;background:#f3f3f3;border-radius:4px"></div>
<svg style="left:40.3px;top:780.5px;" width="13.6" height="7.5"><path d="M0.7 0.7 L6.8 6.8 L12.9 0.7" fill="none" stroke="#444" stroke-width="1.5"></path></svg>
<div class="t" style="left: 62.66px; font-size: 15.6px; color: rgb(24, 24, 24); letter-spacing: 0.14px; top: 776.2px;">Youth Membership (18–25)</div>
<div class="t" style="left: 44.9px; font-size: 11.6px; color: rgb(68, 68, 68); letter-spacing: 0.144px; top: 816px;">Membership Fees - Youth(18-25)</div>
<div class="t" style="left: 44.78px; font-size: 13.6px; color: rgb(24, 24, 24); letter-spacing: -0.063px; top: 838px;">$100.00</div>
<div class="a" style="left:41px;top:856px;width:589px;height:1px;background:#c9c9c9"></div>
<svg style="left:611.3px;top:834.5px;" width="14" height="14"><g fill="#747474"><path d="M0.4 13.6 L1.2 9.6 L4.4 12.8Z"></path><path d="M2.4 8.6 L8.8 2.2 L11.8 5.2 L5.4 11.6Z"></path><path d="M9.7 1.3 L10.9 0.1 L13.9 3.1 L12.7 4.3Z"></path></g></svg>
<div class="t" style="left: 657.8px; font-size: 11.6px; color: rgb(68, 68, 68); letter-spacing: 0.092px; top: 816px;">BAP % - Youth</div>
<div class="t" style="left: 657.68px; font-size: 13.6px; color: rgb(24, 24, 24); letter-spacing: -0.29px; top: 838px;">25.00%</div>
<div class="a" style="left:654px;top:856px;width:588.7px;height:1px;background:#c9c9c9"></div>
<svg style="left:1224px;top:834.5px;" width="14" height="14"><g fill="#747474"><path d="M0.4 13.6 L1.2 9.6 L4.4 12.8Z"></path><path d="M2.4 8.6 L8.8 2.2 L11.8 5.2 L5.4 11.6Z"></path><path d="M9.7 1.3 L10.9 0.1 L13.9 3.1 L12.7 4.3Z"></path></g></svg>
<div class="t" style="left: 657.8px; font-size: 11.6px; color: rgb(68, 68, 68); letter-spacing: 0.263px; top: 865.3px;">Membership % - Youth</div>
<div class="t" style="left: 657.68px; font-size: 13.6px; color: rgb(24, 24, 24); letter-spacing: -0.29px; top: 885.7px;">75.00%</div>
<div class="a" style="left:654px;top:904.5px;width:588.7px;height:1px;background:#c9c9c9"></div>
<div class="a" style="left:30.3px;top:922px;width:1223.7px;height:31.7px;background:#f3f3f3;border-radius:4px"></div>
<svg style="left:40.3px;top:935.5px;" width="13.6" height="7.5"><path d="M0.7 0.7 L6.8 6.8 L12.9 0.7" fill="none" stroke="#444" stroke-width="1.5"></path></svg>
<div class="t" style="left: 62.66px; font-size: 15.6px; color: rgb(24, 24, 24); letter-spacing: 0.243px; top: 931.2px;">Adult Membership (26–64)</div>
<div class="t" style="left: 44.9px; font-size: 11.6px; color: rgb(68, 68, 68); letter-spacing: 0.204px; top: 970.8px;">Membership Fees - Adult(26-64)</div>
<div class="t" style="left: 44.78px; font-size: 13.6px; color: rgb(24, 24, 24); letter-spacing: -0.063px; top: 992.7px;">$375.00</div>
<div class="a" style="left:41px;top:1011.7px;width:589px;height:1px;background:#c9c9c9"></div>
<svg style="left:611.3px;top:989.5px;" width="14" height="14"><g fill="#747474"><path d="M0.4 13.6 L1.2 9.6 L4.4 12.8Z"></path><path d="M2.4 8.6 L8.8 2.2 L11.8 5.2 L5.4 11.6Z"></path><path d="M9.7 1.3 L10.9 0.1 L13.9 3.1 L12.7 4.3Z"></path></g></svg>
<div class="t" style="left: 657.8px; font-size: 11.6px; color: rgb(68, 68, 68); letter-spacing: 0.196px; top: 970.8px;">BAP % - Adult</div>
<div class="t" style="left: 657.68px; font-size: 13.6px; color: rgb(24, 24, 24); letter-spacing: -0.29px; top: 992.7px;">20.00%</div>
<div class="a" style="left:654px;top:1011.7px;width:588.7px;height:1px;background:#c9c9c9"></div>
<svg style="left:1224px;top:989.5px;" width="14" height="14"><g fill="#747474"><path d="M0.4 13.6 L1.2 9.6 L4.4 12.8Z"></path><path d="M2.4 8.6 L8.8 2.2 L11.8 5.2 L5.4 11.6Z"></path><path d="M9.7 1.3 L10.9 0.1 L13.9 3.1 L12.7 4.3Z"></path></g></svg>
<div class="t" style="left: 657.8px; font-size: 11.6px; color: rgb(68, 68, 68); letter-spacing: 0.37px; top: 1020px;">Membership % - Adult</div>
<div class="a" style="left:1285px;top:421.6px;width:607px;height:376.2px;background:#fff;border-radius:4px;box-shadow:0 1px 2px rgba(0,0,0,0.12)"></div>
<div class="t" style="left: 1313.06px; font-size: 15.6px; color: rgb(24, 24, 24); font-weight: 700; letter-spacing: 0.288px; top: 447.2px;">Activity</div>
<div class="t" style="left: 1418.66px; font-size: 15.6px; color: rgb(68, 68, 68); letter-spacing: 0.27px; top: 447.2px;">Chatter</div>
<div class="a" style="left:1300.8px;top:473px;width:575.5px;height:1px;background:#747474"></div>
<div class="a" style="left:1300.8px;top:471px;width:82px;height:3px;background:#1b7fd9"></div>
<div class="a" style="left:1305.2px;top:488.3px;width:88.8px;height:31.3px;border:1px solid #8c8c8c;border-radius:4px;background:#fff"></div>
<div class="a" style="left:1361.7px;top:488.3px;width:1px;height:31.3px;background:#8c8c8c"></div>
<svg style="left:1321.9px;top:492px;" width="24" height="24"><rect width="24" height="24" rx="4" fill="#d65ff0"></rect><rect x="5" y="6.5" width="14" height="12" rx="1.5" fill="#fff"></rect><rect x="7.5" y="4.5" width="1.6" height="3.5" fill="#fff"></rect><rect x="14.9" y="4.5" width="1.6" height="3.5" fill="#fff"></rect><rect x="7.0" y="10.5" width="2" height="1.8" fill="#d65ff0"></rect><rect x="7.0" y="13.7" width="2" height="1.8" fill="#d65ff0"></rect><rect x="10.6" y="10.5" width="2" height="1.8" fill="#d65ff0"></rect><rect x="10.6" y="13.7" width="2" height="1.8" fill="#d65ff0"></rect><rect x="14.2" y="10.5" width="2" height="1.8" fill="#d65ff0"></rect><rect x="14.2" y="13.7" width="2" height="1.8" fill="#d65ff0"></rect></svg>
<svg style="left:1373.0px;top:502.5px;" width="10.3" height="6.5"><path d="M0 0 L10.3 0 L5.15 6.5Z" fill="#666"></path></svg>
<div class="a" style="left:1398.3px;top:488.3px;width:88.8px;height:31.3px;border:1px solid #8c8c8c;border-radius:4px;background:#fff"></div>
<div class="a" style="left:1454.8px;top:488.3px;width:32.3px;height:31.3px;border:1px solid #e0e0e0;border-left:none;border-radius:0 4px 4px 0;background:#fff"></div>
<div class="a" style="left:1454.8px;top:488.3px;width:1px;height:31.3px;background:#8c8c8c"></div>
<svg style="left:1415.0px;top:492px;" width="24" height="24"><rect width="24" height="24" rx="4" fill="#1ba45a"></rect><path d="M5 6.5 L6.5 8 L9 5.2" fill="none" stroke="#fff" stroke-width="1.5"></path><rect x="10.5" y="6" width="8.5" height="2" fill="#fff"></rect><rect x="10.5" y="10.8" width="8.5" height="2" fill="#fff"></rect><rect x="10.5" y="15.6" width="8.5" height="2" fill="#fff"></rect><circle cx="7" cy="11.8" r="1.1" fill="#fff"></circle><circle cx="7" cy="16.6" r="1.1" fill="#fff"></circle></svg>
<svg style="left:1466.1px;top:502.5px;" width="10.3" height="6.5"><path d="M0 0 L10.3 0 L5.15 6.5Z" fill="#c9c9c9"></path></svg>
<div class="a" style="left:1491.5px;top:488.3px;width:88.8px;height:31.3px;border:1px solid #8c8c8c;border-radius:4px;background:#fff"></div>
<div class="a" style="left:1548.0px;top:488.3px;width:32.3px;height:31.3px;border:1px solid #e0e0e0;border-left:none;border-radius:0 4px 4px 0;background:#fff"></div>
<div class="a" style="left:1548.0px;top:488.3px;width:1px;height:31.3px;background:#8c8c8c"></div>
<svg style="left:1508.2px;top:492px;" width="24" height="24"><rect width="24" height="24" rx="4" fill="#0c9d92"></rect><rect x="6.5" y="4.5" width="11.5" height="15" rx="2" fill="#fff"></rect><rect x="5.2" y="7" width="2.4" height="1.4" fill="#fff"></rect><rect x="5.2" y="11" width="2.4" height="1.4" fill="#fff"></rect><rect x="5.2" y="15" width="2.4" height="1.4" fill="#fff"></rect><path d="M10.2 8.2 C10.2 12.5 12 14.8 15.5 15.8 L16 13.8 L14.3 13 L13.5 13.8 C12.5 13.3 11.8 12.2 11.5 11 L12.3 10.3 L11.8 8.2Z" fill="#0c9d92"></path></svg>
<svg style="left:1559.3px;top:502.5px;" width="10.3" height="6.5"><path d="M0 0 L10.3 0 L5.15 6.5Z" fill="#c9c9c9"></path></svg>
<div class="a" style="left:1584.4px;top:488.3px;width:88.8px;height:31.3px;border:1px solid #8c8c8c;border-radius:4px;background:#fff"></div>
<div class="a" style="left:1640.9px;top:488.3px;width:1px;height:31.3px;background:#8c8c8c"></div>
<svg style="left:1601.1000000000001px;top:492px;" width="24" height="24"><rect width="24" height="24" rx="4" fill="#939393"></rect><rect x="4.5" y="6.5" width="15" height="11" rx="1.2" fill="#fff"></rect><path d="M5.5 7.8 L12 12.8 L18.5 7.8" fill="none" stroke="#939393" stroke-width="1.6"></path></svg>
<svg style="left:1652.2px;top:502.5px;" width="10.3" height="6.5"><path d="M0 0 L10.3 0 L5.15 6.5Z" fill="#666"></path></svg>
<div class="t" style="left: 1606.12px; font-size: 13px; color: rgb(116, 116, 116); letter-spacing: 0.058px; top: 550.25px;">Filters: All time • All activities • All types</div>
<div class="a" style="left:1844.2px;top:538.6px;width:31.8px;height:31px;border:1px solid #747474;border-radius:4px;background:#fff"></div>
<svg style="left:1853.5px;top:548px;" width="13" height="13"><g fill="#747474"><circle cx="6.5" cy="6.5" r="4.6"></circle><rect x="5.3" y="0" width="2.4" height="13" rx="0.6"></rect><rect x="5.3" y="0" width="2.4" height="13" rx="0.6" transform="rotate(60 6.5 6.5)"></rect><rect x="5.3" y="0" width="2.4" height="13" rx="0.6" transform="rotate(120 6.5 6.5)"></rect></g><circle cx="6.5" cy="6.5" r="2" fill="#fff"></circle></svg>
<div class="t" style="left: 1677.82px; font-size: 13px; color: rgb(11, 92, 171); letter-spacing: -0.472px; top: 581.8px;">Refresh</div>
<div class="a" style="left:1730px;top:585px;width:3px;height:3px;background:#181818;border-radius:50%"></div>
<div class="t" style="left: 1742.82px; font-size: 13px; color: rgb(11, 92, 171); letter-spacing: -0.138px; top: 581.8px;">Expand All</div>
<div class="a" style="left:1812.8px;top:585px;width:3px;height:3px;background:#181818;border-radius:50%"></div>
<div class="t" style="left: 1824.82px; font-size: 13px; color: rgb(11, 92, 171); letter-spacing: 0.172px; top: 581.8px;">View All</div>
<div class="a" style="left:1302.2px;top:613.1px;width:572.5px;height:31.5px;background:#f3f3f3;border-radius:4px"></div>
<svg style="left:1311.9px;top:627.2px;" width="12.1" height="7"><path d="M0.7 0.7 L6.05 6.3 L11.4 0.7" fill="none" stroke="#181818" stroke-width="1.6"></path></svg>
<div class="t" style="left: 1332.91px; font-size: 14px; color: rgb(24, 24, 24); font-weight: 700; letter-spacing: -0.526px; top: 621.9px;">Upcoming &amp; Overdue</div>
<div class="t" style="left: 1527.02px; font-size: 13px; color: rgb(24, 24, 24); letter-spacing: 0.081px; top: 658px;">No activities to show.</div>
<div class="t" style="left: 1412.62px; font-size: 13px; color: rgb(24, 24, 24); letter-spacing: -0.078px; top: 676.8px;">Get started by sending an email, scheduling a task, and more.</div>
<div class="a" style="left:1301px;top:709px;width:575.3px;height:1px;background:#c9c9c9"></div>
<div class="t" style="left: 1382.62px; font-size: 13px; color: rgb(24, 24, 24); letter-spacing: -0.079px; top: 729.9px;">No past activity. Past meetings and tasks marked as done show up here.</div>
<div class="a" style="left:1904px;top:121px;width:16px;height:911px;background:#fbfbfb"></div>
<div class="a" style="left:1908px;top:139px;width:9px;height:666px;background:#8c8c8c;border-radius:4.5px"></div>
<svg style="left:1907px;top:126.5px;" width="11" height="6"><path d="M0 6 L11 6 L5.5 0Z" fill="#8c8c8c"></path></svg>
<svg style="left:1907px;top:1021px;" width="11" height="6"><path d="M0 0 L11 0 L5.5 6Z" fill="#8c8c8c"></path></svg>
<div class="a" style="left:0px;top:1032px;width:1920px;height:48px;background:#1d1d1d"></div>
<svg style="left:21px;top:1045px;" width="20" height="20"><defs><linearGradient id="sun" x1="0" y1="0" x2="1" y2="1"><stop offset="0" stop-color="#ffd000"></stop><stop offset="1" stop-color="#f26b00"></stop></linearGradient></defs><circle cx="10" cy="10" r="10" fill="url(#sun)"></circle></svg>
<div class="t" style="left: 49.91px; font-size: 11.5px; color: rgb(255, 255, 255); font-weight: 700; letter-spacing: 0.176px; top: 1043.1px;">78°F</div>
<div class="t" style="left: 49.91px; font-size: 11.5px; color: rgb(208, 208, 208); letter-spacing: 0.385px; top: 1058.5px;">Sunny</div>
<svg style="left:506.6px;top:1045px;" width="23.5" height="23"><defs><linearGradient id="wl" x1="0" y1="0" x2="1" y2="1"><stop offset="0" stop-color="#6ee0ff"></stop><stop offset="1" stop-color="#1a8fe6"></stop></linearGradient></defs><rect x="0" y="0" width="11" height="10.8" fill="url(#wl)"></rect><rect x="12.3" y="0" width="11.2" height="10.8" fill="url(#wl)"></rect><rect x="0" y="12.1" width="11" height="10.9" fill="url(#wl)"></rect><rect x="12.3" y="12.1" width="11.2" height="10.9" fill="url(#wl)"></rect></svg>
<div class="a" style="left:542.9px;top:1040px;width:220.3px;height:32px;background:#2b2b2b;border:1px solid #3c3c3c;border-radius:16px"></div>
<svg style="left:554.5px;top:1049px;" width="16" height="16"><circle cx="6.5" cy="6.5" r="5.3" fill="none" stroke="#e6e6e6" stroke-width="1.5"></circle><path d="M10.3 10.3 L15 15" stroke="#e6e6e6" stroke-width="1.6"></path></svg>
<div class="t" style="left: 579.46px; font-size: 14px; color: rgb(224, 224, 224); letter-spacing: -0.472px; top: 1049.7px;">Search</div>
<svg style="left:713px;top:1042px;" width="44" height="28"><defs><linearGradient id="mn" x1="0" y1="0" x2="1" y2="1"><stop offset="0" stop-color="#f0cf70"></stop><stop offset="0.5" stop-color="#e8d890"></stop><stop offset="1" stop-color="#e09050"></stop></linearGradient><linearGradient id="hl" x1="0" y1="0" x2="1" y2="0"><stop offset="0" stop-color="#f4f6ff"></stop><stop offset="0.45" stop-color="#c8d0e8"></stop><stop offset="0.7" stop-color="#4c5a8c"></stop><stop offset="1" stop-color="#4a5890"></stop></linearGradient></defs><circle cx="20.7" cy="10.8" r="11.2" fill="url(#mn)"></circle><circle cx="15" cy="7.5" r="2.2" fill="#e0b040" opacity="0.7"></circle><circle cx="23" cy="19" r="1.6" fill="#d89a50" opacity="0.6"></circle><path d="M0.5 23 L2.5 15.5 L4 20 L5.5 13 L7.5 21 L9 17 L11 23Z M26 22 L28.5 14 L30 19 L31.5 12.5 L33.5 18.5 L35 15.5 L38 22Z" fill="#4a5ed0"></path><path d="M0.8 25 Q10 20.5 20 22 Q30 21 37.5 24 Q33 27.2 20 27 Q5 27.2 0.8 25Z" fill="url(#hl)"></path></svg>
<svg style="left:775px;top:1045px;" width="24.5" height="22"><rect x="8" y="0" width="16" height="14" rx="2" fill="#bdbdbd"></rect><rect x="0" y="7" width="16" height="14.5" rx="2" fill="#8a8a8a"></rect></svg>
<svg style="left:818.8px;top:1044.5px;" width="24" height="23"><path d="M12 0.5 A11.3 11 0 1 1 3.5 19 L0.5 22.5 L2 16.5 A11.3 11 0 0 1 12 0.5Z" fill="#7b5cd6"></path><rect x="6" y="7.5" width="8.5" height="8" rx="1.5" fill="#fff"></rect><path d="M14.5 11.5 L18.5 8.5 L18.5 14.5Z" fill="#fff"></path></svg>
<svg style="left:862.6px;top:1045px;" width="25" height="22"><path d="M0 2 Q0 0 2 0 L9 0 L11.5 3 L23 3 Q25 3 25 5 L25 20 Q25 22 23 22 L2 22 Q0 22 0 20Z" fill="#f0b429"></path><rect x="0" y="6" width="25" height="16" rx="1.5" fill="#ffd25e"></rect><rect x="8" y="14" width="9" height="7" rx="1" fill="#2f7de0"></rect></svg>
<div class="a" style="left:872px;top:1072.5px;width:6px;height:2.5px;background:#9a9a9a;border-radius:2px"></div>
<svg style="left:906.8px;top:1044.5px;" width="24.5" height="24.5"><defs><linearGradient id="ed" x1="0" y1="0" x2="1" y2="1"><stop offset="0" stop-color="#35c1f1"></stop><stop offset="0.5" stop-color="#1f8fe0"></stop><stop offset="1" stop-color="#36c752"></stop></linearGradient></defs><circle cx="12.25" cy="12.25" r="12" fill="url(#ed)"></circle><path d="M5 14 Q6 7 13 7 Q19 7 19.5 12 L9 12 Q10 18 17 18 Q13 22 9 20 Q5 18 5 14Z" fill="#1d1d1d"></path></svg>
<svg style="left:951.5px;top:1043.5px;" width="24" height="25"><defs><linearGradient id="ffo" x1="0.8" y1="0" x2="0.2" y2="1"><stop offset="0" stop-color="#ffe040"></stop><stop offset="0.45" stop-color="#ff8a1a"></stop><stop offset="1" stop-color="#f02a6a"></stop></linearGradient><radialGradient id="ffp" cx="0.5" cy="0.4" r="0.6"><stop offset="0" stop-color="#b46cff"></stop><stop offset="1" stop-color="#6a2ad8"></stop></radialGradient></defs><path d="M12 3.5 C17.5 3.5 22 8 22 13.5 C22 19 17.5 23.5 12 23.5 C6.5 23.5 2 19 2 13.5 C2 10.5 3.3 8 5.3 6.2 C5 8 5.8 9.5 7 10 C7.5 7 9.5 5 12 3.5Z" fill="url(#ffo)"></path><path d="M15 0.8 C19 3 22 6.5 22 11 C20.5 8.5 18 7 15.5 6.8 C16 4.5 15.8 2.5 15 0.8Z" fill="#ffd23a"></path><circle cx="12.5" cy="14.5" r="5.3" fill="url(#ffp)"></circle><path d="M4.5 9 C7 8.5 9.5 9.5 10.5 11.5 C8.5 11 6 11.5 4.5 12.5Z" fill="#ff9a2a"></path></svg>
<div class="a" style="left:987.5px;top:1036.2px;width:38.8px;height:39.3px;background:#2d2d2d;border-radius:5px;border:1px solid #333"></div>
<svg style="left:995px;top:1043.7px;" width="24" height="24"><circle cx="12" cy="12" r="11.8" fill="#db4437"></circle><path d="M13.71 7.30 L23.62 9.95 A11.8 11.8 0 0 1 7.96 23.09 L15.21 15.83Z" fill="#f4c20d"></path><path d="M15.21 15.83 L7.96 23.09 A11.8 11.8 0 0 1 4.42 2.96 L7.08 12.87Z" fill="#0f9d58"></path><circle cx="12" cy="12" r="5.6" fill="#fff"></circle><circle cx="12" cy="12" r="4.4" fill="#4285f4"></circle></svg>
<svg style="left:1008px;top:1039px;" width="14" height="14"><circle cx="7" cy="7" r="7" fill="#c8c0b8"></circle><circle cx="7" cy="6" r="3.5" fill="#4a3a30"></circle><path d="M1.5 12 Q7 7 12.5 12 A7 7 0 0 1 1.5 12Z" fill="#4a3a30"></path></svg>
<div class="a" style="left:998.7px;top:1072px;width:16.3px;height:3px;background:#4cc2ff;border-radius:2px"></div>
<svg style="left:1039px;top:1043.7px;" width="24" height="24"><circle cx="12" cy="12" r="11.8" fill="#db4437"></circle><path d="M13.71 7.30 L23.62 9.95 A11.8 11.8 0 0 1 7.96 23.09 L15.21 15.83Z" fill="#f4c20d"></path><path d="M15.21 15.83 L7.96 23.09 A11.8 11.8 0 0 1 4.42 2.96 L7.08 12.87Z" fill="#0f9d58"></path><circle cx="12" cy="12" r="5.6" fill="#fff"></circle><circle cx="12" cy="12" r="4.4" fill="#4285f4"></circle></svg>
<svg style="left:1053px;top:1039px;" width="11" height="11"><circle cx="5.5" cy="5.5" r="5.5" fill="#333"></circle><rect x="2.5" y="3" width="6" height="5" rx="1" fill="#666"></rect></svg>
<svg style="left:1082.5px;top:1043.7px;" width="24" height="24"><circle cx="12" cy="12" r="11.8" fill="#db4437"></circle><path d="M13.71 7.30 L23.62 9.95 A11.8 11.8 0 0 1 7.96 23.09 L15.21 15.83Z" fill="#f4c20d"></path><path d="M15.21 15.83 L7.96 23.09 A11.8 11.8 0 0 1 4.42 2.96 L7.08 12.87Z" fill="#0f9d58"></path><circle cx="12" cy="12" r="5.6" fill="#fff"></circle><circle cx="12" cy="12" r="4.4" fill="#4285f4"></circle></svg>
<svg style="left:1097px;top:1038.5px;" width="14" height="14"><circle cx="7" cy="7" r="7" fill="#c2185b"></circle><text x="7" y="10.5" font-size="9" text-anchor="middle" fill="#fff" font-family="Liberation Sans">S</text></svg>
<div class="a" style="left:1092px;top:1072.5px;width:6px;height:2.5px;background:#9a9a9a;border-radius:2px"></div>
<svg style="left:1127px;top:1046px;" width="24.5" height="19"><rect width="24.5" height="19" fill="#b8d4ec"></rect><rect x="1" y="1" width="22.5" height="17" fill="#dbe9f5"></rect><path d="M1 18 L1 14 L5 12 L8 4 L10 12 L13 10 L16 3 L18 12 L23.5 14 L23.5 18Z" fill="#5aa5e0"></path></svg>
<svg style="left:1171px;top:1046px;" width="23" height="19"><rect width="23" height="19" fill="#c8c8c8"></rect><rect x="1" y="2.5" width="21" height="15.5" fill="#0c0c0c"></rect><path d="M3 6 L6 6 M3 8 L8 8" stroke="#ccc" stroke-width="1"></path><rect x="13" y="9" width="6" height="1" fill="#ccc"></rect></svg>
<svg style="left:1215px;top:1043.7px;" width="24" height="24.5"><path d="M12 1 C18 1 22.5 4 22.5 10 C22.5 14 20.5 16 19 17 L19 22 Q16 24 14 21 L13 18 Q11 18 10 18 L9.5 22 Q7 24.5 5 21 L5 17 C3 15.5 1.5 13 1.5 9.5 C1.5 4 6 1 12 1Z" fill="#336791" stroke="#cfe0ee" stroke-width="1.2"></path><path d="M9 6 Q12 10 10 14 M15 6 Q13 10 15 14" stroke="#cfe0ee" stroke-width="1" fill="none"></path></svg>
<svg style="left:1258.7px;top:1043.7px;" width="24.5" height="24.5"><path d="M17.5 0.8 L24 3.8 L24 20.7 L17.5 23.7 L6.5 13.8 L2.5 17 L0.5 16 L0.5 8.5 L2.5 7.5 L6.5 10.7Z" fill="#1f9cf0"></path><path d="M17.5 0.8 L17.5 23.7 L24 20.7 L24 3.8Z" fill="#0065a9"></path><path d="M2.5 7.5 L17.5 19 L17.5 5.5 L2.5 17Z" fill="none" stroke="#1d1d1d" stroke-width="1.2"></path></svg>
<div class="a" style="left:1267px;top:1072.5px;width:6px;height:2.5px;background:#9a9a9a;border-radius:2px"></div>
<svg style="left:1302.5px;top:1043.7px;" width="24.5" height="24.5"><defs><linearGradient id="pc" x1="0" y1="0" x2="1" y2="1"><stop offset="0" stop-color="#21d789"></stop><stop offset="0.5" stop-color="#07c3f2"></stop><stop offset="1" stop-color="#fcf84a"></stop></linearGradient></defs><rect width="24.5" height="24.5" rx="3" fill="url(#pc)"></rect><rect x="4" y="4" width="16.5" height="16.5" fill="#000"></rect><text x="5.5" y="12.5" font-size="7.5" fill="#fff" font-family="Liberation Sans" font-weight="700">PC</text><rect x="5.5" y="16" width="6" height="1.2" fill="#fff"></rect></svg>
<svg style="left:1346.7px;top:1043.7px;" width="24.5" height="24.5"><path d="M12.25 0.5 L18.5 6.75 L12.25 13 L6 6.75Z" fill="#e46a6a"></path><path d="M6 6.75 L12.25 13 L6 19.25 L-0.25 13Z" fill="#5b8de0"></path><path d="M18.5 6.75 L24.75 13 L18.5 19.25 L12.25 13Z" fill="#6ab04c"></path><path d="M12.25 13 L18.5 19.25 L12.25 25.5 L6 19.25Z" fill="#f2d35b"></path><path d="M9 7 L16 17 M12 12 L17 8" stroke="#222" stroke-width="1.5"></path></svg>
<svg style="left:1390.7px;top:1043.7px;" width="24.5" height="24.5"><rect width="24.5" height="24.5" fill="#e8e8e8"></rect><rect x="4.5" y="3.5" width="15.5" height="11" rx="1" fill="#2a74b8"></rect><rect x="6" y="5" width="12.5" height="8" fill="#bfe3f5"></rect><rect x="10.5" y="14.5" width="3.5" height="2.5" fill="#2a74b8"></rect><rect x="7" y="17" width="10.5" height="1.5" fill="#2a74b8"></rect><rect x="5" y="20" width="14.5" height="1.5" fill="#9a9a9a"></rect></svg>
<div class="a" style="left:1399.5px;top:1072.5px;width:6px;height:2.5px;background:#9a9a9a;border-radius:2px"></div>
<svg style="left:1671.5px;top:1053px;" width="11" height="6"><path d="M0.7 5.3 L5.5 0.7 L10.3 5.3" fill="none" stroke="#f0f0f0" stroke-width="1.5"></path></svg>
<svg style="left:1700.6px;top:1050px;" width="16.5" height="11"><path d="M4 11 Q0 11 0 7.5 Q0 4.5 3.5 4.2 Q5 0 9 0 Q13 0 14 4 Q16.5 4.5 16.5 7.5 Q16.5 11 13 11Z" fill="#bdbdbd"></path></svg>
<svg style="left:1732.7px;top:1050px;" width="16.5" height="11"><rect x="0.7" y="0.7" width="15" height="9.6" rx="1" fill="none" stroke="#f0f0f0" stroke-width="1.3"></rect><rect x="3.0" y="3" width="1.4" height="1.3" fill="#f0f0f0"></rect><rect x="4.2" y="5.5" width="1.4" height="1.3" fill="#f0f0f0"></rect><rect x="5.6" y="3" width="1.4" height="1.3" fill="#f0f0f0"></rect><rect x="6.800000000000001" y="5.5" width="1.4" height="1.3" fill="#f0f0f0"></rect><rect x="8.2" y="3" width="1.4" height="1.3" fill="#f0f0f0"></rect><rect x="9.4" y="5.5" width="1.4" height="1.3" fill="#f0f0f0"></rect><rect x="10.8" y="3" width="1.4" height="1.3" fill="#f0f0f0"></rect><rect x="12.0" y="5.5" width="1.4" height="1.3" fill="#f0f0f0"></rect><rect x="4" y="7.5" width="8" height="1.2" fill="#f0f0f0"></rect></svg>
<svg style="left:1765px;top:1050.3px;" width="16.5" height="11"><path d="M0.8 4.2 Q8.25 -2 15.7 4.2 M3.2 6.6 Q8.25 2.2 13.3 6.6 M5.6 9 Q8.25 6.5 10.9 9" fill="none" stroke="#f0f0f0" stroke-width="1.3"></path><circle cx="8.25" cy="10.2" r="1" fill="#f0f0f0"></circle></svg>
<svg style="left:1788.6px;top:1049px;" width="17" height="14.5"><path d="M1 4.8 L4 4.8 L8 1 L8 13.5 L4 9.7 L1 9.7Z" fill="none" stroke="#f0f0f0" stroke-width="1.2"></path><path d="M10.5 4.5 Q12 7.25 10.5 10 M12.8 2.8 Q15.5 7.25 12.8 11.7 M15 1 Q18.5 7.25 15 13.5" fill="none" stroke="#f0f0f0" stroke-width="1.2"></path></svg>
<div class="t" style="left: 1826.89px; font-size: 11.8px; color: rgb(240, 240, 240); letter-spacing: -0.074px; top: 1043px;">12:20 PM</div>
<div class="t" style="left: 1821.09px; font-size: 11.8px; color: rgb(240, 240, 240); letter-spacing: 0.449px; top: 1058.6px;">12/4/2025</div>
<svg style="left:1885.2px;top:1049px;" width="14" height="15"><path d="M7 0.5 Q12 0.5 12 6 L12 10 L13.8 12 L0.2 12 L2 10 L2 6 Q2 0.5 7 0.5Z" fill="#7fcfe6"></path><path d="M5 13 Q7 15.5 9 13Z" fill="#7fcfe6"></path></svg>


</body></html>
